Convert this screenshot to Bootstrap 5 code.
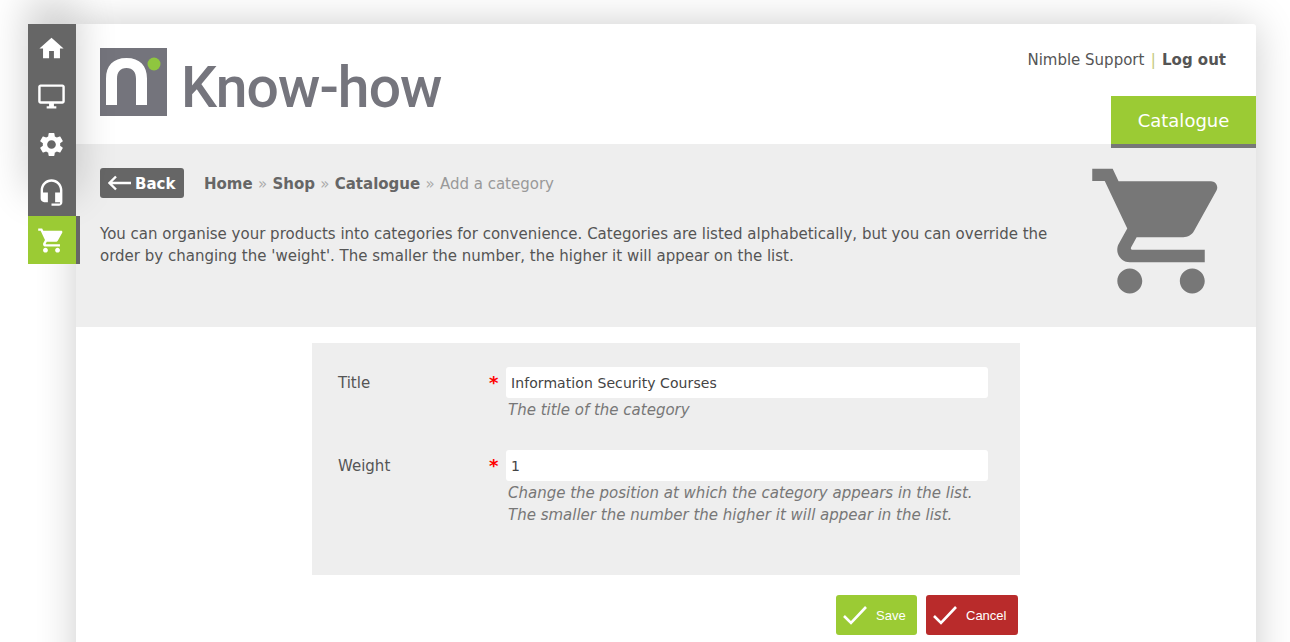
<!DOCTYPE html>
<html lang="en"><head><meta charset="utf-8"><title>Add a category</title>
<link href="https://cdn.jsdelivr.net/npm/bootstrap@5.3.0/dist/css/bootstrap.min.css" rel="stylesheet">
<style>
html,body{height:642px;overflow:hidden;background:#fff}
body{font-family:"DejaVu Sans",Verdana,sans-serif;font-size:15px;color:#555;line-height:22px}
.page-wrap{padding:24px 34px 0 28px}
.side-menu{width:48px;flex:none;position:relative;z-index:2}
.side-items{background:#666;box-shadow:0 -24px 40px rgba(0,0,0,.2)}
.side-item{height:48px;display:flex;align-items:center;justify-content:center;color:#fff;padding-right:1px}
.side-item svg{width:29px;height:29px;fill:currentColor;display:block}
.side-active{background:#9bcb34;position:relative}
.side-active::after{content:"";position:absolute;left:48px;top:0;bottom:0;width:4px;background:#666}
.main-panel{width:1180px;height:700px;background:#fff;box-shadow:0 0 40px rgba(0,0,0,.2);border-radius:0 3px 0 0}
.top-band{height:120px;padding:24px 30px 0 24px}
.brand-square{width:67px;height:68px;background:#74747c;display:block;flex:none}
.brand-word{font-family:"Roboto",sans-serif;font-weight:500;font-size:57px;line-height:68px;color:#75757d;margin-left:14px;letter-spacing:-.9px;padding-top:6px}
.user-line{padding-top:1px;color:#555}
.user-line a{color:#555;font-weight:700;text-decoration:none}
.user-sep{color:#c4c87a;margin:0 1.5px}
.section-tab{position:absolute;right:0;top:72px;width:145px;height:52px;background:#9bcb34;border-bottom:4px solid #777;color:#fff;font-size:18px;line-height:50px;text-align:center}
.grey-band{height:183px;background:#eee;padding:24px 24px 0}
.back-link{width:84px;height:30px;background:#666;color:#fff;border-radius:3px;font-weight:700;text-decoration:none;display:flex;align-items:center;padding:2px 0 0 8px;gap:4px}
.back-link svg{margin-top:-3px}
.crumbs{margin-left:20px;color:#999;padding-top:2px}
.crumbs a{color:#666;font-weight:700;text-decoration:none}
.crumb-sep{color:#aaa;margin:0 .5px}
.intro-text{width:960px;margin:25px 0 0}
.big-cart{width:150px;height:150px;fill:#777;flex:none;margin:-12px -4px 0 0;display:block}
.form-box{width:708px;height:232px;background:#eee;margin:16px auto 0 236px;padding:24px 32px 0 26px}
.field-row{display:flex;margin-bottom:29px}
.field-label{width:151px;flex:none;padding-top:5px}
.req-star{width:17px;flex:none;color:#f00;font-size:18px;font-weight:700;padding-top:5px}
.field-main{flex:1}
.field-input{display:block;width:100%;height:31px;border:0;border-radius:3px;background:#fff;padding:1px 5px 0;font:14px/30px "DejaVu Sans",Verdana,sans-serif;letter-spacing:.08px;color:#444;outline:0}
.field-help{color:#777;font-style:italic;margin-left:2px;line-height:22px;padding-top:1px}
.action-row{width:708px;margin:20px 0 0 236px;justify-content:flex-end;gap:9px;padding-right:2px}
.act-btn{height:40px;border-radius:3px;color:#fff;font:13px/40px "Liberation Sans",sans-serif;display:flex;align-items:center;text-decoration:none;border:0;padding-top:1px}
.act-btn svg{width:24px;height:24px;fill:none;stroke:#fff;stroke-width:2.6;margin-top:-1px}
.act-save{width:81px;background:#9bcb34;padding-left:7px;gap:9px}
.act-cancel{width:92px;background:#b92b2b;padding-left:7px;gap:9px}
</style></head>
<body>
<div class="page-wrap d-flex align-items-start">
  <nav class="side-menu">
    <div class="side-items">
      <div class="side-item"><svg viewBox="0 0 24 24"><path d="M10 20v-6h4v6h5v-8h3L12 3 2 12h3v8z"/></svg></div>
      <div class="side-item"><svg viewBox="0 0 24 24"><path d="M21 2H3c-1.1 0-2 .9-2 2v12c0 1.1.9 2 2 2h7v2H8v2h8v-2h-2v-2h7c1.1 0 2-.9 2-2V4c0-1.1-.9-2-2-2zm0 14H3V4h18v12z"/></svg></div>
      <div class="side-item"><svg viewBox="0 0 24 24"><path d="M19.14 12.94c.04-.3.06-.61.06-.94 0-.32-.02-.64-.07-.94l2.03-1.58c.18-.14.23-.41.12-.61l-1.92-3.32c-.12-.22-.37-.29-.59-.22l-2.39.96c-.5-.38-1.03-.7-1.62-.94l-.36-2.54c-.04-.24-.24-.41-.48-.41h-3.84c-.24 0-.43.17-.47.41l-.36 2.54c-.59.24-1.13.57-1.62.94l-2.39-.96c-.22-.08-.47 0-.59.22L2.74 8.87c-.12.21-.08.47.12.61l2.03 1.58c-.05.3-.09.63-.09.94s.02.64.07.94l-2.03 1.58c-.18.14-.23.41-.12.61l1.92 3.32c.12.22.37.29.59.22l2.39-.96c.5.38 1.03.7 1.62.94l.36 2.54c.05.24.24.41.48.41h3.84c.24 0 .44-.17.47-.41l.36-2.54c.59-.24 1.13-.56 1.62-.94l2.39.96c.22.08.47 0 .59-.22l1.92-3.32c.12-.22.07-.47-.12-.61l-2.01-1.58zM12 15.6c-1.98 0-3.6-1.62-3.6-3.6s1.62-3.6 3.6-3.6 3.6 1.62 3.6 3.6-1.62 3.6-3.6 3.6z"/></svg></div>
      <div class="side-item"><svg viewBox="0 0 24 24"><path d="M12 1c-4.97 0-9 4.03-9 9v7c0 1.66 1.34 3 3 3h3v-8H5v-2c0-3.87 3.13-7 7-7s7 3.13 7 7v2h-4v8h4v1h-7v2h6c1.66 0 3-1.34 3-3V10c0-4.97-4.03-9-9-9z"/></svg></div>
    </div>
    <div class="side-item side-active"><svg viewBox="0 0 24 24"><path d="M7 18c-1.1 0-1.99.9-1.99 2S5.9 22 7 22s2-.9 2-2-.9-2-2-2zM1 2v2h2l3.6 7.59-1.35 2.45c-.16.28-.25.61-.25.96 0 1.1.9 2 2 2h12v-2H7.42c-.14 0-.25-.11-.25-.25l.03-.12.9-1.63h7.45c.75 0 1.41-.41 1.75-1.03l3.58-6.47c.08-.14.12-.31.12-.48 0-.55-.45-1-1-1H5.21l-.94-2H1zm16 16c-1.1 0-1.99.9-1.99 2s.89 2 1.99 2 2-.9 2-2-.9-2-2-2z"/></svg></div>
  </nav>
  <main class="main-panel position-relative">
    <header class="top-band d-flex justify-content-between align-items-start">
      <div class="d-flex align-items-start">
        <svg class="brand-square" viewBox="0 0 67 68"><path d="M6 57V30.500C6 18 13 10 26.500 10S47 18 47 30.500V57H36V31c0-7-3-11-9.500-11S17 24 17 31v26z" fill="#fff"/><circle cx="54" cy="16" r="6.500" fill="#8fc63f"/></svg>
        <span class="brand-word">Know-how</span>
      </div>
      <div class="user-line">Nimble Support <span class="user-sep">|</span> <a href="#">Log out</a></div>
    </header>
    <div class="section-tab">Catalogue</div>
    <section class="grey-band d-flex justify-content-between align-items-start">
      <div>
        <div class="d-flex align-items-center">
          <a class="back-link" href="#"><svg width="23" height="16" viewBox="0 0 23 16" fill="none" stroke="#fff" stroke-width="2.400"><path d="M23 8H1.500M8 1.500 1.500 8 8 14.500"/></svg>Back</a>
          <div class="crumbs"><a href="#">Home</a> <span class="crumb-sep">»</span> <a href="#">Shop</a> <span class="crumb-sep">»</span> <a href="#">Catalogue</a> <span class="crumb-sep">»</span> Add a category</div>
        </div>
        <p class="intro-text">You can organise your products into categories for convenience. Categories are listed alphabetically, but you can override the order by changing the 'weight'. The smaller the number, the higher it will appear on the list.</p>
      </div>
      <svg class="big-cart" viewBox="0 0 24 24"><path d="M7 18c-1.1 0-1.99.9-1.99 2S5.9 22 7 22s2-.9 2-2-.9-2-2-2zM1 2v2h2l3.6 7.59-1.35 2.45c-.16.28-.25.61-.25.96 0 1.1.9 2 2 2h12v-2H7.42c-.14 0-.25-.11-.25-.25l.03-.12.9-1.63h7.45c.75 0 1.41-.41 1.75-1.03l3.58-6.47c.08-.14.12-.31.12-.48 0-.55-.45-1-1-1H5.21l-.94-2H1zm16 16c-1.1 0-1.99.9-1.99 2s.89 2 1.99 2 2-.9 2-2-.9-2-2-2z"/></svg>
    </section>
    <form>
      <div class="form-box">
        <div class="field-row">
          <label class="field-label">Title</label><span class="req-star">*</span>
          <div class="field-main"><input class="field-input" value="Information Security Courses"><div class="field-help">The title of the category</div></div>
        </div>
        <div class="field-row">
          <label class="field-label">Weight</label><span class="req-star">*</span>
          <div class="field-main"><input class="field-input" value="1"><div class="field-help">Change the position at which the category appears in the list.<br>The smaller the number the higher it will appear in the list.</div></div>
        </div>
      </div>
      <div class="action-row d-flex">
        <a class="act-btn act-save" href="#"><svg viewBox="0 0 24 24"><path d="M1 13l7 7L23 4"/></svg>Save</a>
        <a class="act-btn act-cancel" href="#"><svg viewBox="0 0 24 24"><path d="M1 13l7 7L23 4"/></svg>Cancel</a>
      </div>
    </form>
  </main>
</div>
</body></html>
